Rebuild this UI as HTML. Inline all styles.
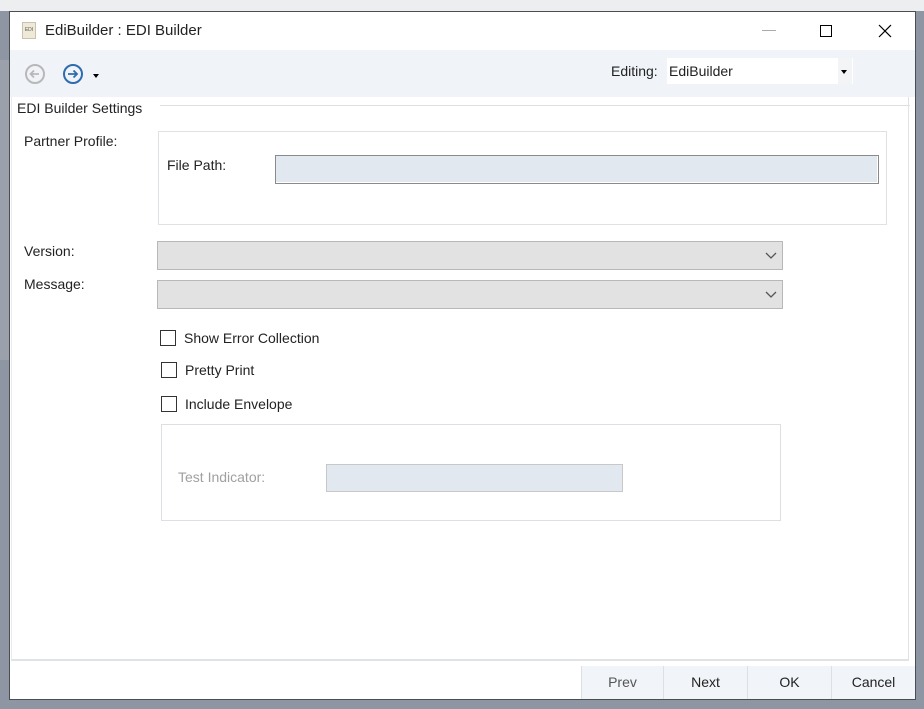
<!DOCTYPE html>
<html><head><style>
*{box-sizing:border-box;margin:0;padding:0}
body{width:924px;height:709px;background:#8d96a2;font-family:"Liberation Sans",sans-serif;font-size:14px;color:#222;position:relative;overflow:hidden}
.a{position:absolute}
.win{left:9px;top:11px;width:907px;height:689px;background:#fff;border:1px solid #4a4d52}
.cb{width:16px;height:16px;border:1px solid #333;background:#fff}
.lbl{font-size:14px}
.btn{top:666px;height:33px;background:#f1f4f8;border-left:1px solid #dcdfe3;text-align:center;line-height:33px;font-size:14px;color:#222}
</style></head><body>
<div class="a" style="left:0;top:0;width:924px;height:11px;background:#eceef0"></div>
<div class="a" style="left:0;top:60px;width:9px;height:300px;background:#9aa1ab"></div>
<div class="a win"></div>
<!-- title -->
<div class="a" style="left:22px;top:22px;width:14px;height:17px;background:#efe9d8;border:1px solid #c8c2b0;font-size:5px;line-height:15px;text-align:center;color:#555">EDI</div>
<div class="a" style="left:45px;top:22px;font-size:15px">EdiBuilder : EDI Builder</div>
<div class="a" style="left:762px;top:30px;width:14px;height:1px;background:#aaa"></div>
<div class="a" style="left:820px;top:25px;width:12px;height:12px;border:1px solid #000"></div>
<svg class="a" style="left:878px;top:24px" width="14" height="14"><path d="M1 1L13 13M13 1L1 13" stroke="#000" stroke-width="1.2"/></svg>
<!-- toolbar -->
<div class="a" style="left:10px;top:50px;width:905px;height:47px;background:#f0f4f8"></div>
<svg class="a" style="left:24px;top:63px" width="22" height="22"><circle cx="11" cy="11" r="9" fill="none" stroke="#b8b8b8" stroke-width="2"/><path d="M15 11H7M10 7.5L6.5 11L10 14.5" fill="none" stroke="#b8b8b8" stroke-width="1.8"/></svg>
<svg class="a" style="left:62px;top:63px" width="22" height="22"><circle cx="11" cy="11" r="9" fill="none" stroke="#2e6bb0" stroke-width="2"/><path d="M6 11H15M11.5 7.5L15 11L11.5 14.5" fill="none" stroke="#2e6bb0" stroke-width="1.8"/></svg>
<div class="a" style="left:93px;top:74px;border:3px solid transparent;border-top:4px solid #000"></div>
<div class="a" style="left:611px;top:63px;font-size:14px">Editing:</div>
<div class="a" style="left:667px;top:58px;width:186px;height:26px;background:#fff"></div>
<div class="a" style="left:669px;top:63px;font-size:14px">EdiBuilder</div>
<div class="a" style="left:838px;top:58px;width:14px;height:26px;background:#f2f4f6"></div>
<div class="a" style="left:841px;top:70px;border:3px solid transparent;border-top:4px solid #000"></div>
<!-- content panel -->
<div class="a" style="left:11px;top:97px;width:898px;height:564px;border-right:1px solid #e0e3e6;border-bottom:2px solid #e0e3e6;border-left:1px solid #e8eaec"></div>
<div class="a" style="left:160px;top:105px;width:750px;height:1px;background:#dcdfe3"></div>
<div class="a" style="left:17px;top:100px;font-size:14px;background:#fff;padding-right:4px">EDI Builder Settings</div>
<div class="a lbl" style="left:24px;top:133px">Partner Profile:</div>
<div class="a" style="left:158px;top:131px;width:729px;height:94px;border:1px solid #dfe2e5"></div>
<div class="a lbl" style="left:167px;top:157px">File Path:</div>
<div class="a" style="left:275px;top:155px;width:604px;height:29px;background:#e1e8ef;border:1px solid #8a8a8a;box-shadow:inset -1px -1px 0 #fff"></div>
<div class="a lbl" style="left:24px;top:243px">Version:</div>
<div class="a" style="left:157px;top:241px;width:626px;height:29px;background:#e2e2e2;border:1px solid #b8b8b8"></div>
<svg class="a" style="left:765px;top:252px" width="12" height="8"><path d="M1 1L6 6L11 1" fill="none" stroke="#555" stroke-width="1.3"/></svg>
<div class="a lbl" style="left:24px;top:276px">Message:</div>
<div class="a" style="left:157px;top:280px;width:626px;height:29px;background:#e2e2e2;border:1px solid #b8b8b8"></div>
<svg class="a" style="left:765px;top:291px" width="12" height="8"><path d="M1 1L6 6L11 1" fill="none" stroke="#555" stroke-width="1.3"/></svg>
<div class="a cb" style="left:160px;top:330px"></div>
<div class="a lbl" style="left:184px;top:330px">Show Error Collection</div>
<div class="a cb" style="left:161px;top:362px"></div>
<div class="a lbl" style="left:185px;top:362px">Pretty Print</div>
<div class="a cb" style="left:161px;top:396px"></div>
<div class="a lbl" style="left:185px;top:396px">Include Envelope</div>
<div class="a" style="left:161px;top:424px;width:620px;height:97px;border:1px solid #dcdfe3"></div>
<div class="a lbl" style="left:178px;top:469px;color:#a0a0a0">Test Indicator:</div>
<div class="a" style="left:326px;top:464px;width:297px;height:28px;background:#e1e8ef;border:1px solid #c8c8c8"></div>
<!-- buttons -->
<div class="a btn" style="left:581px;width:82px;color:#555">Prev</div>
<div class="a btn" style="left:663px;width:84px">Next</div>
<div class="a btn" style="left:747px;width:84px">OK</div>
<div class="a btn" style="left:831px;width:84px">Cancel</div>
</body></html>
